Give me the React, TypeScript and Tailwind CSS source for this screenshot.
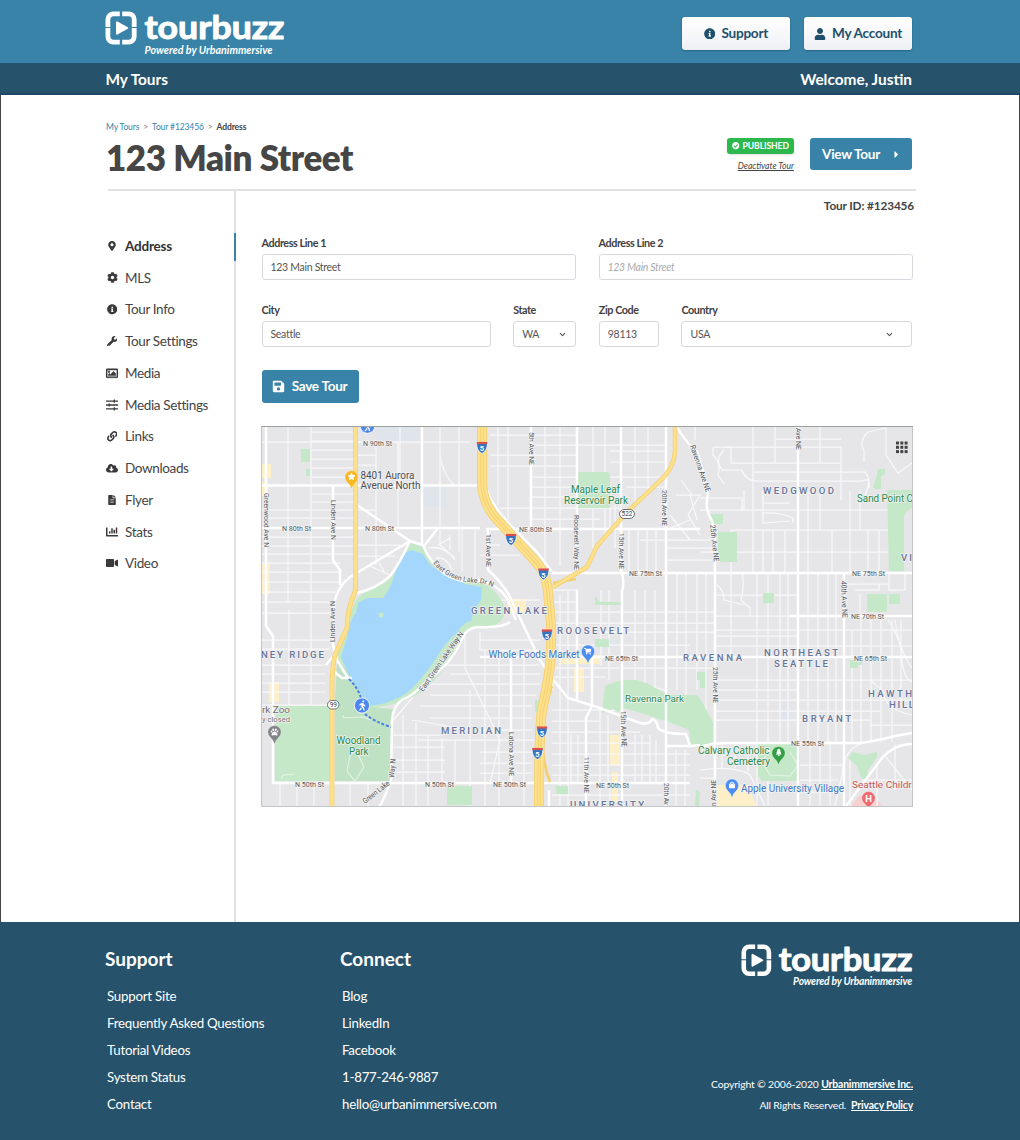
import React from "react";
import {
  FaInfoCircle, FaUser, FaMapMarkerAlt, FaCog, FaWrench, FaRegImage, FaLink, FaCloudDownloadAlt,
  FaFileAlt, FaChartBar, FaVideo, FaSave, FaCheckCircle, FaCaretRight, FaPaw, FaWalking,
  FaShoppingCart, FaStar, FaTree, FaShoppingBag,
} from "react-icons/fa";
import { FiChevronDown } from "react-icons/fi";

function Logo({ className, tagX, tagW }: { className: string; tagX: number; tagW: number }) {
  return (
    <svg className={className} viewBox="0 0 180 46" fill="none">
      <g stroke="#fff" strokeWidth="4.8">
        <path d="M14.8 2.9H8.4a5.5 5.5 0 0 0-5.5 5.5V15.900M17.200 2.900h6.500a5.500 5.500 0 0 1 5.500 5.500V15.900M14.800 31.100H8.400a5.500 5.500 0 0 1-5.500-5.500V17.100M17.200 31.100h6.500a5.500 5.500 0 0 0 5.500-5.500V17.100" />
      </g>
      <path d="M12 11.300v11.400l10.300-5.700z" fill="#fff" stroke="#fff" strokeWidth="2" strokeLinejoin="round" />
      <text x="39.500" y="28" fill="#fff" stroke="#fff" strokeWidth="1" strokeLinejoin="round" fontFamily="Lato, sans-serif" fontWeight="700" fontSize="33" textLength="140" lengthAdjust="spacingAndGlyphs">tourbuzz</text>
      <text x={tagX} y="42.500" fill="#fff" fontFamily="Lato, sans-serif" fontWeight="700" fontStyle="italic" fontSize="10.8" textLength={tagW} lengthAdjust="spacingAndGlyphs">Powered by Urbanimmersive</text>
    </svg>
  );
}

function Sliders() {
  return (
    <svg width="12" height="12" viewBox="0 0 12 12" stroke="currentColor" strokeWidth="1.3">
      <path d="M0 2.2h12M0 6h12M0 9.8h12M8.3.6v3.2M3.2 4.4v3.2M8.3 8.2v3.2" />
    </svg>
  );
}

const NAV: [string, React.ReactNode][] = [
  ["Address", <FaMapMarkerAlt size={10} />],
  ["MLS", <FaCog size={11} />],
  ["Tour Info", <FaInfoCircle size={10.5} />],
  ["Tour Settings", <FaWrench size={10.5} />],
  ["Media", <FaRegImage size={12.5} stroke="currentColor" strokeWidth={20} />],
  ["Media Settings", <Sliders />],
  ["Links", <FaLink size={10.5} />],
  ["Downloads", <FaCloudDownloadAlt size={12.5} />],
  ["Flyer", <FaFileAlt size={10} />],
  ["Stats", <FaChartBar size={12} />],
  ["Video", <FaVideo size={12} />],
];

function Field({ label, value, className, placeholder, select }: { label: string; value: string; className: string; placeholder?: boolean; select?: "near" | "far" }) {
  return (
    <label className={className}>
      <span className="block h-[18px] text-[10.8px] leading-[14px] font-bold tracking-[-0.42px] text-[#414141]">{label}</span>
      <span className="flex h-[26px] items-center justify-between rounded-[3px] border border-[#d8d8de] bg-white pt-px pl-2 text-[10.5px] tracking-[-0.3px] text-[#555]">
        <span className={placeholder ? "italic tracking-[-0.3px] text-[#aaa]" : ""}>{value}</span>
        {select && <FiChevronDown size={9} strokeWidth={3} className={select === "far" ? "mr-[17px]" : "mr-[8px]"} />}
      </span>
    </label>
  );
}

type Pt = string;
const MAJOR: Pt[] = [
  "M266 427V626L273 636V783H690", "M261 485.5H478", "M261 528H480M486 529H700", "M333 485V560L340 570V585",
  "M531 427V529", "M577 427V568", "M621 427V570Q625 580 622 592V806", "M666 427V806", "M422 427V544",
  "M488 529V570Q500 580 509 595L540 660L552 678L568 698L597 707L640 723Q650 725 652 719Q657 720 658 728Q664 734 686 734L690 746L700 745",
  "M798 427V806", "M844 573V806", "M677 427Q684 440 697 452Q703 468 708 495Q704 508 712 521Q716 535 715 555V806",
  "M552 573H912", "M480 657H912", "M790 616H912", "M511 650V784", "M592 657V706L586 718V806M577 590V700",
  "M700 747Q712 743 730 743H862Q885 739 895 736L912 733", "M912 744Q895 744 882 758L846 806",
  "M357 505L410 541L423 545Q430 563 445 574Q460 584 480 580Q497 584 507 598L516 620",
  "M410 541L350 577Q337 587 334 604L333 645L337 660L348 678",
  "M410 541Q399 565 390 576Q376 589 357 593", "M424 546L438 528",
  "M510 622Q502 628 480 627Q465 627 461 642Q450 665 427 681Q413 696 402 700Q393 706 392 720L391 780Q388 790 380 806",
  "M487 490Q492 506 513 528L537 552L552 572", "M549 790V806M552 658V690M690 746H666",
  "M333 656L326 665M332 670L342 678H352",
];
const MINOR: Pt[] = [
  "M288 427V602M311 427V705M398 442V528M376 442V565M440 427V528M459 427V552M400 427V490M311 705V626M289 610V705M280 784V806M297 784V806M314 784V806M350 784V806M368 784V806",
  "M261 442H422M422 442H470M440 455Q443 475 455 486M261 510H355M261 518H355M261 537H355M261 546H355M261 554H355M261 563H340M261 572H340M261 582H340M261 592H336M261 602H333M261 613H333",
  "M311 432H355M311 441H355M311 450H355M311 459H355M311 468H355M311 477H355M311 494H355M311 502H355M261 640H330M261 649H330M261 665H325M261 674H325M261 683H325M261 692H325M261 705H330",
  "M355 442H376M355 455H376M355 465H376M355 510H376M355 545H400M355 556H395M370 566L392 576M375 556L385 573",
  "M498 427V505M508 427V520M545 427V566M560 427V566M593 427V548M605 427V540M635 427V505M648 427V492M610 508V535M615 505V548M629 529V572M638 529V572M647 529V572M656 529V572",
  "M490 435H578M531 445H666M490 455H578M490 466H578M531 477H578M531 487H578M531 497H578M500 508H620M531 519H600M610 451H666M610 462H666M610 477H660M627 487H666M490 545H500M480 555H520",
  "M480 600H540M480 640H540M418 740H540M412 720L470 730M420 706H460M392 722L413 697M480 650H540M445 665H540M450 674H540M430 684H540M430 695H536M430 706H532M430 718H532M480 730H532M480 752H532M480 763H532M480 773H532M392 735H440M392 747H445M392 760H445M392 772H445",
  "M403 715V806M416 722V806M428 735V806M442 738V784M455 740V784M470 690V806M485 650V806M499 650V806M524 650V806M465 630V668L500 740L490 784M480 632V650",
  "M560 595V806M568 590V806M601 590V665M609 590V680M635 590V680M645 590V686M655 590V690M677 573V690M686 573V695M697 573V690M706 573V720",
  "M553 590H577M553 602H577M553 612H715M553 623H715M553 645H622M553 668H620M553 677H605M600 632H715M622 645H690M622 668H715M622 680L665 690",
  "M552 710H620M552 721H600M552 732H640M552 743H650M552 754H690M552 765H690M552 775H690M552 795H690M571 735V784M578 735V784M600 708V784M608 715V784M635 735V784M642 735V784M650 735V784M656 740V784M676 750V806M685 750V806M600 784V806M610 784V806",
  "M713 447V455Q722 465 718 475L724 484M714 447H731V463H841M731 447V463M753 427V573M775 427V463M820 427V463M841 447V500M724 450Q714 460 722 470H742Q745 481 758 481H862Q871 477 869 488M754 472H865Q872 480 865 495M731 463V455M775 439H841",
  "M864 462V450Q858 442 868 432L886 428V455L898 473L912 463M725 447H841M700 498H742V510M700 510H888M763 491V523L790 521M763 503H790M763 513Q780 512 793 518V523M744 490V510M731 573V530H888M700 552H888M773 530V572M763 530V572M785 530V572M808 491V572M820 491V530M832 530V572M850 491V572M860 491V530M868 530V572M879 530V572",
  "M742 573Q745 583 741 600L750 608V616M717 585Q724 590 724 600L745 605M731 573V660M757 573V806M768 573V806M780 573V742M788 573V742M808 573V742M818 573V742M828 573V742M836 573V742M852 630V742M861 620V742M871 620V742M881 620V742M892 620V742M901 620V700",
  "M715 595H798M715 616H790M715 630H912M715 636H798M715 646H912M715 680H912M715 700H912M715 711H880M715 720H870M845 584H889M855 590H879V584M860 594V616M889 573V590H905V573M870 725H912M715 690H798",
  "M695 427V440M681 480L692 495M676 495H700L688 515L700 535M690 495L697 520M670 515L690 540M666 530L690 520M666 548H712M666 560H712M640 540H712",
  "M888 620Q902 640 902 660Q904 680 912 682M870 680L882 690Q885 710 912 715M895 620Q899 650 912 668M862 743Q843 750 842 775L835 806M850 758V806M810 743V806M820 743V806M830 743V806M800 765H845M800 780H838M800 792H835",
  "M700 770Q735 765 750 775L765 806M700 778H715M722 743V770M735 743V768M748 743V772M877 765V806M862 780H912M886 757L912 790M895 745V790",
  "M428 548Q445 545 455 560M435 558Q447 556 452 570M440 530V545L455 558M462 528V572M475 528V577M438 545L450 538M450 535V550",
];

const FREEWAY = "M482 427V482Q482 500 494 516L537 563Q547 575 548 592L551 625V655Q549 680 542 710Q539 730 539 806";
const AURORA = "M355.5 427V590Q347 610 347 628L335 655Q332 668 332 685V806";
const LAKE_CITY = "M675 427V452Q674 466 663 478L627 512L597 546L587 567L553 587";

function Label({ x, y, s, w, t, c = "#565a60", r, wt = 400, spread }: { x: number; y: number; s: number; w: number; t: string; c?: string; r?: number; wt?: number; spread?: boolean }) {
  return (
    <text x={x} y={y} fontSize={s} textLength={w} lengthAdjust={spread ? "spacing" : "spacingAndGlyphs"} fill={c} fontWeight={wt} stroke="#f2f2f2" strokeWidth="1.6" strokeLinejoin="round" paintOrder="stroke" transform={r ? `rotate(${r} ${x} ${y})` : undefined}>{t}</text>
  );
}

const STREETS: [number, number, string, number, number?][] = [
  [363, 445.5, "N 90th St", 29], [282, 530.5, "N 80th St", 29], [365, 530.5, "N 80th St", 29],
  [519, 532, "NE 80th St", 33], [629, 575.5, "NE 75th St", 33], [852, 576, "NE 75th St", 33],
  [851, 618.5, "NE 70th St", 33], [605, 660.5, "NE 65th St", 33], [854, 660.5, "NE 65th St", 33],
  [791, 745.5, "NE 55th St", 33], [295, 786.5, "N 50th St", 29], [425, 786.5, "N 50th St", 29],
  [493, 787, "NE 50th St", 33], [596, 787.5, "NE 50th St", 33],
  [264, 493, "Greenwood Ave N", 54, 90], [330.5, 500, "Linden Ave N", 40, 90],
  [335, 642, "Linden Ave N", 41, -90], [529, 432, "5th Ave NE", 33, 90], [574, 515, "Roosevelt Way NE", 55, 90],
  [486, 534, "1st Ave NE", 33, 90], [619, 533, "15th Ave NE", 36, 90], [662, 490, "20th Ave NE", 36, 90],
  [795.5, 428, "Ave NE", 22, 90], [710, 525, "25th Ave NE", 37, 84], [841, 581, "40th Ave NE", 37, 88],
  [712.5, 667, "25th Ave NE", 36, 90], [716, 806, "n Ave NE", 26, -90], [508.5, 732, "Latona Ave NE", 44, 90],
  [584, 757, "11th Ave NE", 36, 90], [620.5, 711, "15th Ave NE", 36, 88], [664, 783, "20th Av", 22, 90],
  [690, 446, "Ravenna Ave NE", 49, 71], [423, 692, "East Green Lake Way N", 71, -55],
  [365, 804, "Green Lake", 32, -38], [394, 778, "Way N", 19, -85],
];

const AREAS: [number, number, string, number][] = [
  [763, 493.5, "WEDGWOOD", 71], [471, 614, "GREEN LAKE", 76], [557, 634, "ROOSEVELT", 72],
  [261, 657.5, "NEY RIDGE", 63], [683, 660.5, "RAVENNA", 59], [764, 656, "NORTHEAST", 74],
  [774, 667, "SEATTLE", 54], [802, 721.5, "BRYANT", 49], [868, 697, "HAWTH", 44], [889, 707.5, "HILL", 25],
  [441, 734, "MERIDIAN", 60], [570, 807.5, "UNIVERSITY", 74], [901, 561, "VI", 11],
];

function Shield({ x, y }: { x: number; y: number }) {
  return (
    <g transform={`translate(${x} ${y})`}>
      <path d="M-5.3-5.5Q0-4.5 5.3-5.5Q6 3 0 6Q-6 3-5.3-5.5Z" fill="#3576c4" stroke="#fff" strokeWidth=".7" />
      <path d="M-5.2-5.6H5.2V-3.4H-5.2Z" fill="#dd504a" />
      <text x="0" y="3.6" textAnchor="middle" fontSize="7.5" fontWeight="700" fill="#fff">5</text>
    </g>
  );
}

function Pin({ x, y, c, children }: { x: number; y: number; c: string; children: React.ReactNode }) {
  return (
    <g transform={`translate(${x} ${y})`}>
      <path d="M0 12Q-1 8-4.5 5A6.6 6.6 0 1 1 4.5 5Q1 8 0 12Z" fill={c} stroke="#fff" strokeOpacity=".6" strokeWidth=".5" />
      {children}
    </g>
  );
}

const GREEN = "#c5e8c8";

function TourMap() {
  return (
    <svg className="-ml-px block h-[381px] w-[652px]" viewBox="261 426 652 381" fontFamily="Roboto, sans-serif">
      <rect x="261" y="426" width="652" height="381" fill="#e6e6e8" />
      <path fill="#dfe5ea" d="M376 427h44v14h-44zM423 487h24v20h-24zM781 702h10v18h-10zM609 640h10v8h-10z" />
      <path fill="#fdf0c8" d="M262 464h9v14h-9zM262 482h6v14h-6zM262 564h8v30h-8zM269 682h10v20h-10zM508 599h18v14h-18zM560 655h40v9h-40zM574 668h10v24h-10zM610 735h10v30h-10zM612 772h6v30h-6zM717 785h30l10 21h-40z" />
      <path d="M851 806l8-10h15l8 10z" fill="#f8d0d0" />
      <g fill="none" stroke="#f8f8f9" strokeWidth="1.25">
        {MINOR.map((d, i) => <path key={i} d={d} />)}
      </g>
      <g fill={GREEN}>
        <path d="M578 472h28q4 0 4 4v32h-32zM605 686l10-4 8-2h14l12 4 18 11h30l4 5 12 22v20l-12 4h-10l-2-16-20-8-45-14-6 4-5-3-11 4z" />
        <path d="M275 706h55v75h-55zM595 596l5 6h22v3h-27zM595 639h14v8h-14zM556 786h12v8h-12zM447 786h25v19h-25zM301 449h9v13h-9zM306 469h4v7h-4z" />
        <path d="M718 532h19v30h-19zM763 593h11v10h-11zM867 594h20v18h-20zM889 594h11v10h-11zM887 490h25v18q-8 4-8 10v53h-15zM873 487l4-12 1-6h7v5l-4 3v12h-6zM710 514h13v10h-13z" />
        <path d="M758 744h42v37h-38l-4-5zM848 758l5-6 12 3 12-3v5l-9 13-2 10-5-2-4-12zM850 660h12v5h-4v3h-8zM700 672h5v16h-5zM696 790l4 2-1 14h-4zM535 700h4v12h-4zM697 672h3v8h-3z" />
        <path d="M410 543Q402 552 398 566Q392 580 378 586Q362 592 356 600Q350 612 347 626Q342 640 336 656L342 670L368 709L400 703L420 693Q450 668 461 640Q467 627 490 627Q506 622 505 607Q498 590 480 582Q455 583 440 570Q430 560 423 547Z" />
        <path d="M337 663L348 670L370 707L393 709L390 781H335V700Z" fill="#bfe2c4" />
      </g>
      <path d="M403 553L412 550L423 554L430 565L447 575L465 584L482 587L481 600Q474 608 471 621Q463 622 458 632Q445 642 437 657Q430 668 417 683Q407 695 395 699L386 703L370 706L363 697L348 673L341 657L347 638Q349 620 356 613L358 603L367 598H383Q390 590 394 576Q396 568 401 561Z" fill="#a5d7fd" />
      <circle cx="381" cy="615" r="2.5" fill={GREEN} />
      <path d="M343 715L344 718 363 717 371 720M350 755L356 750 364 767 355 781 347 771ZM281 779L283 775 295 774M790 752L798 765 790 776 770 775 762 762 770 750" fill="none" stroke="#e5f3e7" strokeWidth="1.1" />
      <g fill="none" stroke="#fff" strokeWidth="2.5" strokeLinejoin="round">
        {MAJOR.map((d, i) => <path key={i} d={d} />)}
      </g>
      <g fill="none" strokeLinejoin="round">
        <g stroke="#f4cf6d">
          <path d={AURORA} strokeWidth="4.8" />
          <path d={LAKE_CITY} strokeWidth="4.4" />
          <path d="M553 583L576 579M552 686Q543 712 542 735M543 752Q545 770 550 782" strokeWidth="2.6" />
          <path d={FREEWAY} strokeWidth="10" />
        </g>
        <g stroke="#fde08c">
          <path d={AURORA} strokeWidth="3.4" />
          <path d={LAKE_CITY} strokeWidth="3" />
          <path d={FREEWAY} strokeWidth="8.4" />
        </g>
        <path d={FREEWAY} stroke="#f4cf6d" strokeWidth="3.4" />
        <path d={FREEWAY} stroke="#fde08c" strokeWidth="1.8" />
      </g>
      <path d="M349 679Q358 688 361 698M365 714Q375 722 391 727" fill="none" stroke="#4a80ea" strokeWidth="2" strokeDasharray="3 1.8" />

      {STREETS.map(([x, y, t, w, r], i) => <Label key={i} x={x} y={y} t={t} w={w} r={r} s={7.6} />)}
      <defs><path id="lakeDrive" d="M433 563Q448 582 478 583Q488 584 496 589" /></defs>
      <text fontSize="7" fill="#565a60" stroke="#f2f2f2" strokeWidth="1.2" paintOrder="stroke"><textPath href="#lakeDrive">East Green Lake Dr N</textPath></text>
      {AREAS.map(([x, y, t, w], i) => <Label key={i} x={x} y={y} t={t} w={w} s={9.6} c="#66759b" wt={500} spread />)}

      <Label x={571} y={493} s={10.2} w={49} t="Maple Leaf" c="#25894a" />
      <Label x={564} y={503.5} s={10.2} w={64} t="Reservoir Park" c="#25894a" />
      <Label x={857} y={502} s={10} w={56} t="Sand Point C" c="#25894a" />
      <Label x={625} y={702} s={9.8} w={59} t="Ravenna Park" c="#25894a" />
      <Label x={336.5} y={744} s={10} w={44} t="Woodland" c="#25894a" />
      <Label x={349} y={754.5} s={10} w={19.5} t="Park" c="#25894a" />
      <Label x={698} y={754} s={10} w={71.5} t="Calvary Catholic" c="#25894a" />
      <Label x={727} y={765} s={10} w={43} t="Cemetery" c="#25894a" />
      <Label x={360.5} y={478.5} s={10} w={54} t="8401 Aurora" c="#4c4f53" />
      <Label x={360.5} y={489} s={10} w={60} t="Avenue North" c="#4c4f53" />
      <Label x={262} y={713} s={9.8} w={28} t="rk Zoo" c="#6b6f74" />
      <Label x={262} y={721.5} s={8} w={28} t="y closed" c="#77797d" />
      <Label x={488.5} y={658} s={10} w={91} t="Whole Foods Market" c="#3f77c6" />
      <Label x={741} y={792} s={10} w={103} t="Apple University Village" c="#3f77c6" />
      <Label x={852} y={787.5} s={9.8} w={65} t="Seattle Childre" c="#c8545a" />

      <Shield x={482} y={447.5} /><Shield x={511} y={539.5} /><Shield x={543.5} y={574} />
      <Shield x={547} y={635} /><Shield x={542} y={732} /><Shield x={537.5} y={753.5} />
      <g fill="#fff" stroke="#5f6368" strokeWidth=".9">
        <rect x="619.5" y="509.5" width="15" height="9" rx="4.5" /><rect x="327.5" y="700.5" width="11.5" height="8.5" rx="4.2" />
      </g>
      <g fill="#444" fontSize="6.5" textAnchor="middle"><text x="627" y="516.4">522</text><text x="333.3" y="707.1">99</text></g>

      <Pin x={351.5} y={477} c="#f9b824"><FaStar x={-4} y={-4.5} size={8} color="#fff" /></Pin>
      <Pin x={588} y={651.5} c="#4b8df0"><FaShoppingCart x={-4} y={-4} size={7.5} color="#fff" /></Pin>
      <Pin x={274.5} y={732} c="#818589"><FaPaw x={-4} y={-4} size={8} color="#fff" /></Pin>
      <Pin x={778.5} y={753} c="#34a045"><FaTree x={-3.5} y={-4.5} size={7.5} color="#fff" /></Pin>
      <Pin x={732} y={785.5} c="#4b8df0"><FaShoppingBag x={-3.5} y={-4} size={7} color="#fff" /></Pin>
      <Pin x={868.5} y={798} c="#ef6a70"><text x="0" y="3.5" textAnchor="middle" fontSize="9.5" fontWeight="700" fill="#fff">H</text></Pin>
      <g stroke="#fff" strokeWidth=".8" fill="#4c86ee"><circle cx="362" cy="705.5" r="7.6" /><circle cx="367.5" cy="426" r="7.3" /></g>
      <FaWalking x={357} y={700.3} size={10.5} color="#fff" /><FaWalking x={362.5} y={421} size={10.5} color="#fff" />
      <g fill="#444">
        {[0, 1, 2].map((a) => [0, 1, 2].map((b) => <rect key={`${a}${b}`} x={896 + a * 4.3} y={441.5 + b * 4.3} width="3" height="3" />))}
      </g>
      <rect x="261.5" y="426.5" width="651" height="380" fill="none" stroke="#c3c6c7" />
      <path d="M261 426.5H913" stroke="#9aa3a0" />
    </svg>
  );
}

const FOOT_A = ["Support Site", "Frequently Asked Questions", "Tutorial Videos", "System Status", "Contact"];
const FOOT_B = ["Blog", "LinkedIn", "Facebook", "1-877-246-9887", "hello@urbanimmersive.com"];

export default function App() {
  return (
    <div className="flex h-[1140px] w-[1020px] flex-col bg-white font-['Lato',sans-serif] text-[#444]">
      <header className="flex h-[63px] shrink-0 justify-between bg-[#3983a9] pr-[108px] pl-[105px]">
        <Logo className="mt-[11px] h-[46px] w-[180px] overflow-visible" tagX={39.5} tagW={128} />
        <div className="flex gap-[14px] pt-[17px] text-[13.6px] font-bold tracking-[-0.25px] text-[#1f506b]">
          <button className="flex h-[33px] w-[108px] items-center justify-center gap-[6px] rounded-[3px] bg-linear-to-b from-white to-[#eff0f5] shadow-[0_1px_2px_rgba(0,40,70,0.35)]"><FaInfoCircle size={11.5} />Support</button>
          <button className="flex h-[33px] w-[108px] items-center justify-center gap-[6px] rounded-[3px] bg-linear-to-b from-white to-[#eff0f5] shadow-[0_1px_2px_rgba(0,40,70,0.35)]"><FaUser size={12} />My Account</button>
        </div>
      </header>
      <div className="flex h-8 shrink-0 items-center justify-between border-b-2 border-[#1c4766] bg-[#26536b] pt-[3px] pr-[108px] pl-[105.5px] text-[15.4px] font-bold text-white">
        <span className="tracking-[-0.05px]">My Tours</span><span>Welcome, Justin</span>
      </div>

      <main className="flex h-[827px] shrink-0 flex-col border-x border-[#444] pl-[105px]">
        <div className="flex h-[96px] w-[809px] justify-between pr-[3px]">
          <div>
            <nav className="mt-[26px] flex h-3 items-center gap-[4px] text-[8.5px] tracking-[-0.12px] text-[#3983a9]">
              <span>My Tours</span><span className="text-[#888]">&gt;</span><span>Tour #123456</span><span className="text-[#888]">&gt;</span><span className="font-bold text-[#444]">Address</span>
            </nav>
            <h1 className="mt-[4px] text-[35px] leading-[41px] font-extrabold tracking-[-0.45px] whitespace-nowrap text-[#464646]">123 Main Street</h1>
          </div>
          <div className="flex gap-4 pt-[43px]">
            <div className="flex flex-col items-end">
              <span className="flex h-4 w-[67px] items-center justify-center gap-[3px] rounded-[3px] bg-[#2db84d] text-[8.6px] font-bold tracking-[-0.1px] text-white shadow-sm"><FaCheckCircle size={7.5} />PUBLISHED</span>
              <a className="mt-[6px] text-[8.6px] leading-3 italic underline">Deactivate Tour</a>
            </div>
            <button className="flex h-8 w-[102px] items-center justify-center gap-[11px] rounded-[3px] bg-[#3983a9] pl-[2px] text-[13.6px] font-bold tracking-[-0.3px] text-white">View Tour<FaCaretRight size={11} /></button>
          </div>
        </div>
        <div className="-mt-[2px] ml-[2px] h-[2px] w-[808px] shrink-0 bg-[#e2e2e3]" />
        <div className="flex flex-1">
          <aside className="w-[130px] border-r-2 border-[#e0e0e2] pt-[39px]">
            {NAV.map(([label, icon], i) => (
              <div key={label} className={i === 0 ? "-mr-[2px] flex h-[31.75px] items-center text-[13.5px] font-bold tracking-[-0.2px] text-[#333]" : "flex h-[31.75px] items-center text-[13.5px] tracking-[-0.36px]"}>
                <span className="flex w-3 justify-center text-[#3a3a3a]">{icon}</span>
                <span className="ml-[7px]">{label}</span>
                {i === 0 && <span className="mt-[2px] ml-auto h-7 w-[2px] bg-[#3983a9]" />}
              </div>
            ))}
          </aside>
          <section className="w-[680px] pl-[26px]">
            <div className="h-[45px] pt-[7px] pr-[2px] text-right text-[11.8px] leading-4 font-bold tracking-[-0.14px]">Tour ID: #123456</div>
            <div className="-ml-[0.5px] flex w-[651px] justify-between">
              <Field className="w-[314px]" label="Address Line 1" value="123 Main Street" />
              <Field className="w-[314px]" label="Address Line 2" value="123 Main Street" placeholder />
            </div>
            <div className="mt-[23px] -ml-[0.5px] flex w-[651px] justify-between">
              <Field className="w-[229px]" label="City" value="Seattle" />
              <Field className="w-[63px]" label="State" value="WA" select="near" />
              <Field className="w-[60px]" label="Zip Code" value="98113" />
              <Field className="w-[231px]" label="Country" value="USA" select="far" />
            </div>
            <button className="mt-[23px] mb-[23px] flex h-[33px] w-[97px] items-center justify-center gap-[7px] rounded-[3px] bg-[#3983a9] pr-[2px] text-[13.6px] font-bold tracking-[-0.3px] text-white"><FaSave size={13} />Save Tour</button>
            <TourMap />
          </section>
        </div>
      </main>

      <footer className="flex h-[218px] shrink-0 bg-[#26536b] pr-[107px] pl-[105px] text-white">
        <div className="w-[235px]">
          <h2 className="mt-[25px] text-[19px] leading-[23px] font-bold">Support</h2>
          <ul className="mt-[13px] ml-[2px] text-[13.3px] leading-[27px] tracking-[-0.24px]">{FOOT_A.map((t) => <li key={t}>{t}</li>)}</ul>
        </div>
        <div className="w-[235px]">
          <h2 className="mt-[25px] text-[19px] leading-[23px] font-bold">Connect</h2>
          <ul className="mt-[13px] ml-[2px] text-[13.3px] leading-[27px] tracking-[-0.24px]">{FOOT_B.map((t) => <li key={t}>{t}</li>)}</ul>
        </div>
        <div className="flex flex-1 flex-col items-end text-[10.4px] tracking-[-0.16px]">
          <Logo className="mt-[22px] h-[44px] w-[172px] overflow-visible" tagX={54.5} tagW={124.5} />
          <p className="mt-[86px] leading-[21px]">Copyright © 2006-2020 <a className="font-bold underline">Urbanimmersive Inc.</a></p>
          <p className="leading-[21px]">All Rights Reserved.&nbsp; <a className="font-bold underline">Privacy Policy</a></p>
        </div>
      </footer>
    </div>
  );
}
